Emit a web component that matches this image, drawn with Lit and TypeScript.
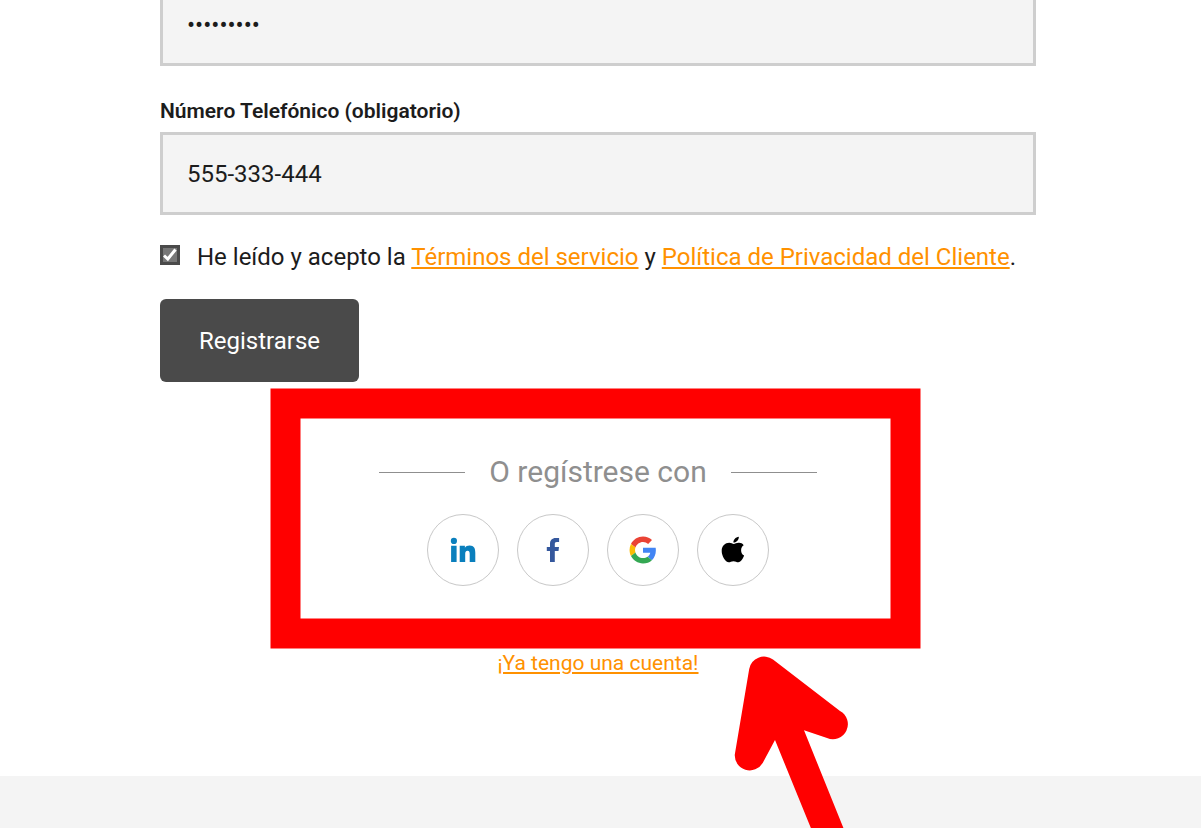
import { LitElement, html, css, svg } from "lit";
import { customElement, state } from "lit/decorators.js";

const icons = {
  linkedin: svg`<svg class="icon" viewBox="0 0 28 28" aria-hidden="true">
    <g fill="#0a7fbd"><circle cx="4.900" cy="4.900" r="3.100"/><path d="M2.100 9.800h5.500v16.200H2.100zM10.700 9.800h5.200v2c.9-1.400 2.500-2.300 4.700-2.300 4.500 0 5.700 2.900 5.700 7.200V26h-5.600v-8c0-2-.3-3.300-2.100-3.300-1.900 0-2.400 1.300-2.400 3.300v8h-5.500z"/></g></svg>`,
  facebook: svg`<svg class="icon" viewBox="0 0 28 28" aria-hidden="true">
    <path fill="#35589d" d="M11 26V15.100H7.800v-4.200H11V7.800C11 4.200 13.200 2 16.600 2h3.500v4h-2.200c-1.700 0-2.100.8-2.100 2.200v2.700h4.200l-.5 4.200h-3.700V26z"/></svg>`,
  google: svg`<svg class="icon" viewBox="-1 -1 50 50" aria-hidden="true">
    <path fill="#ea4335" d="M24 9.500c3.540 0 6.710 1.220 9.210 3.600l6.850-6.850C35.900 2.380 30.470 0 24 0 14.620 0 6.510 5.380 2.560 13.220l7.980 6.190C12.430 13.720 17.740 9.500 24 9.500z"/>
    <path fill="#4285f4" d="M46.980 24.550c0-1.570-.15-3.090-.38-4.550H24v9.020h12.940c-.58 2.960-2.260 5.480-4.780 7.180l7.730 6c4.510-4.180 7.090-10.360 7.090-17.650z"/>
    <path fill="#fbbc05" d="M10.530 28.590A14.500 14.500 0 0 1 9.770 24c0-1.600.27-3.140.76-4.590l-7.980-6.190A23.900 23.900 0 0 0 0 24c0 3.880.92 7.540 2.560 10.780z"/>
    <path fill="#34a853" d="M24 48c6.480 0 11.930-2.130 15.890-5.810l-7.730-6c-2.150 1.450-4.920 2.300-8.160 2.300-6.260 0-11.570-4.220-13.470-9.910l-7.980 6.190C6.510 42.620 14.620 48 24 48z"/></svg>`,
  apple: svg`<svg class="icon" viewBox="0 0 28 28" aria-hidden="true">
    <path d="M22.100 14.200c0-2.500 1.100-4 2.600-5-1.200-1.700-2.800-2.300-4.600-2.400-2.200-.2-4.200 1.200-5.300 1.200s-2.800-1.200-4.600-1.200C6.300 6.900 2.700 9.700 2.700 15c0 4.900 3.700 11.200 7.100 11.300 1.600 0 2.500-1.100 4.700-1.100 2.100 0 3 1.100 4.800 1.100 2.700 0 5-4.300 5.800-6.700-1.900-.9-3-2.900-3-5.400zM18.600 4.400c1-1.200 1.300-2.300 1.200-3.600-1.500.1-3.100 1-4.100 2.200-.9 1-1.400 2.200-1.300 3.600 1.600.1 3.200-.9 4.200-2.200z"/></svg>`,
};

const providers = [
  { name: "LinkedIn", icon: icons.linkedin },
  { name: "Facebook", icon: icons.facebook },
  { name: "Google", icon: icons.google },
  { name: "Apple", icon: icons.apple },
];

@customElement("app-root")
export class AppRoot extends LitElement {
  @state() private phone = "555-333-444";
  @state() private accepted = true;

  static styles = css`
    :host {
      display: flex;
      flex-direction: column;
      min-height: 100vh;
      overflow: hidden;
      background: #fff;
      color: #1c1c1c;
      font: 400 24px/30px Roboto, "Liberation Sans", sans-serif;
    }
    * {
      box-sizing: border-box;
    }
    a {
      color: #ff9100;
      text-decoration: underline;
    }
    main {
      display: flex;
      flex-direction: column;
      margin-top: -17px;
      padding: 0 165px 98px 160px;
    }
    form {
      display: flex;
      flex-direction: column;
      align-items: flex-start;
    }
    .input {
      width: 100%;
      height: 83px;
      padding: 0 24px;
      border: 3px solid #cecece;
      border-radius: 0;
      background: #f4f4f4;
      color: inherit;
      font: inherit;
      outline: none;
    }
    .label {
      margin: 30px 0 6px;
      font-size: 21px;
      font-weight: 600;
    }
    .terms {
      display: flex;
      gap: 17px;
      margin: 27px 0;
    }
    .check {
      appearance: none;
      flex: none;
      width: 20px;
      height: 20px;
      margin: 3px 0 0;
      border: 3px solid #4a4a4a;
      background: #777;
    }
    .check:checked {
      background: #777 url("data:image/svg+xml,%3Csvg xmlns='http://www.w3.org/2000/svg' viewBox='0 0 14 14'%3E%3Cpath d='M1 7.500L4.800 11L12.500 1.500' fill='none' stroke='%23fff' stroke-width='3'/%3E%3C/svg%3E") center / 14px 14px no-repeat;
    }
    .submit {
      height: 83px;
      padding: 0 39px;
      border: 0;
      border-radius: 6px;
      background: #4a4a4a;
      color: #fff;
      font: inherit;
    }
    .social {
      position: relative;
      display: flex;
      flex-direction: column;
      align-items: center;
      gap: 24px;
      align-self: center;
      margin-top: 72px;
    }
    .divider {
      display: flex;
      align-items: center;
      gap: 24px;
      margin: 0;
      color: #8f8f8f;
      font-size: 30px;
      font-weight: 400;
      line-height: 36px;
    }
    .divider::before,
    .divider::after {
      content: "";
      width: 86px;
      border-top: 1px solid #8f8f8f;
    }
    .providers {
      display: flex;
      gap: 18px;
    }
    .provider {
      display: grid;
      place-items: center;
      width: 72px;
      height: 72px;
      padding: 0;
      border: 1px solid #c8c8c8;
      border-radius: 50%;
      background: #fff;
    }
    .icon {
      width: 28px;
      height: 28px;
    }
    .login {
      align-self: center;
      margin-top: 62px;
      font-size: 21px;
    }
    .annotation {
      position: absolute;
      top: -66px;
      left: -109px;
      width: 651px;
      height: 460px;
      pointer-events: none;
    }
    footer {
      flex: 1;
      background: #f4f4f4;
    }
  `;

  render() {
    return html`
      <main>
        <form @submit=${(e: Event) => e.preventDefault()}>
          <input class="input" type="password" aria-label="Contraseña" .value=${"123456789"} />
          <label class="label" for="phone">Número Telefónico (obligatorio)</label>
          <input
            class="input"
            id="phone"
            type="tel"
            .value=${this.phone}
            @input=${(e: Event) => (this.phone = (e.target as HTMLInputElement).value)}
          />
          <div class="terms">
            <input
              class="check"
              id="terms"
              type="checkbox"
              .checked=${this.accepted}
              @change=${(e: Event) => (this.accepted = (e.target as HTMLInputElement).checked)}
            />
            <label for="terms"
              >He leído y acepto la <a href="#terminos">Términos del servicio</a> y
              <a href="#privacidad">Política de Privacidad del Cliente</a>.</label
            >
          </div>
          <button class="submit" type="submit">Registrarse</button>
        </form>

        <section class="social">
          <h2 class="divider">O regístrese con</h2>
          <div class="providers">
            ${providers.map(
              (p) => html`<button class="provider" type="button" aria-label=${p.name}>${p.icon}</button>`
            )}
          </div>
          <svg class="annotation" viewBox="270 388 651 460" aria-hidden="true">
            <rect x="285.500" y="403.500" width="620" height="230" fill="none" stroke="#f00" stroke-width="30" />
            <path
              fill="#f00"
              d="M749.200 669A15 15 0 0 1 773 659.600L840 711A15 15 0 0 1 827 738L804 730.300L851.500 848H819L775 740L762.700 763A15 15 0 0 1 734.800 754.500Z"
            />
          </svg>
        </section>

        <a class="login" href="#acceso">¡Ya tengo una cuenta!</a>
      </main>
      <footer></footer>
    `;
  }
}
